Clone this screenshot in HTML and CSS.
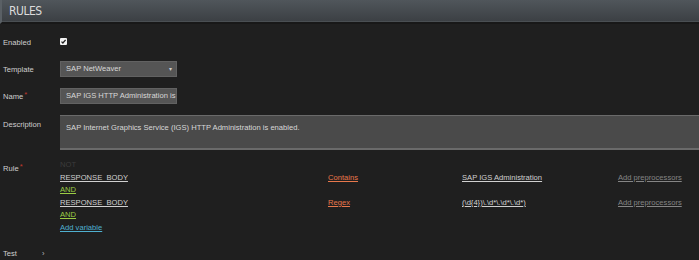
FILE: index.html
```html
<!DOCTYPE html>
<html lang="en">
<head>
	<meta charset="UTF-8">
	<title>Rules</title>
	<link rel="stylesheet" href="styles.css">
</head>
<body>
	<div class="header">RULES</div>
	<div class="form">
		<div class="row row-enabled">
			<div class="label">Enabled</div>
			<div class="field"><span class="check"><svg width="7" height="7" viewBox="0 0 7 7"><path d="M1.5 3.6 L2.9 5 L5.6 1.8" fill="none" stroke="#222" stroke-width="1.3"/></svg></span></div>
		</div>
		<div class="row row-template">
			<div class="label">Template</div>
			<div class="field"><div class="select">SAP NetWeaver<span class="arrow">&#9662;</span></div></div>
		</div>
		<div class="row row-name">
			<div class="label">Name<span class="req">*</span></div>
			<div class="field"><div class="input">SAP IGS HTTP Administration is</div></div>
		</div>
		<div class="row row-desc">
			<div class="label">Description</div>
			<div class="field"><div class="textarea">SAP Internet Graphics Service (IGS) HTTP Administration is enabled.</div></div>
		</div>
		<div class="row row-rule">
			<div class="label label-rule">Rule<span class="req">*</span></div>
			<div class="field rule">
				<div class="not">NOT</div>
				<div class="cond">
					<a class="var">RESPONSE_BODY</a>
					<a class="op">Contains</a>
					<a class="val">SAP IGS Administration</a>
					<a class="pre">Add preprocessors</a>
				</div>
				<div><a class="and">AND</a></div>
				<div class="cond">
					<a class="var">RESPONSE_BODY</a>
					<a class="op">Regex</a>
					<a class="val">(\d{4})\.\d*\.\d*\.\d*)</a>
					<a class="pre">Add preprocessors</a>
				</div>
				<div><a class="and">AND</a></div>
				<div><a class="addvar">Add variable</a></div>
			</div>
		</div>
		<div class="row row-test">
			<div class="label label-test">Test<span class="chev">&rsaquo;</span></div>
		</div>
	</div>
</body>
</html>
```

FILE: styles.css
```css
*{
	margin: 0;
	padding: 0;
	box-sizing: border-box;
}
body{
	background: #1f1f1f;
	font-family: "Liberation Sans", Arial, sans-serif;
	font-size: 7.6px;
	color: #cfcfcf;
	width: 699px;
	height: 260px;
	overflow: hidden;
}
.header{
	height: 24px;
	padding-left: 7px;
	background: linear-gradient(#50565b, #3b3f43);
	border-left: 2px solid #5a6065;
	border-bottom: 2px solid #181818;
	box-shadow: inset 0 -1px 0 #4a4f53;
	font-family: "DejaVu Sans", sans-serif;
	font-stretch: condensed;
	font-size: 12px;
	line-height: 22px;
	color: #dcdcdc;
	letter-spacing: -0.5px;
}
.form{
	padding-left: 3px;
}
.row{
	display: grid;
	grid-template-columns: 57px 1fr;
	align-items: center;
}
.label{
	white-space: nowrap;
}
.req{
	color: #c0392b;
	position: relative;
	top: -2px;
	margin-left: 1px;
}
.row-enabled{
	margin-top: 11px;
	height: 14px;
}
.check{
	display: block;
	width: 7px;
	height: 7px;
	background: #f2f2f2;
	border-radius: 1px;
	margin-top: -2px;
}
.check svg{
	display: block;
}
.row-template{
	margin-top: 12px;
}
.select, .input{
	width: 117px;
	height: 16px;
	background: #555;
	border: 1px solid #626262;
	padding-left: 5px;
	line-height: 14px;
	color: #d8d8d8;
	position: relative;
	white-space: nowrap;
	overflow: hidden;
}
.arrow{
	position: absolute;
	right: 4px;
	top: 0;
	font-size: 6px;
	color: #ccc;
}
.row-name{
	margin-top: 11px;
}
.row-desc{
	margin-top: 11px;
	align-items: start;
}
.row-desc .label{
	padding-top: 5px;
}
.textarea{
	height: 35px;
	background: #4a4a4a;
	border-top: 1px solid #6a6a6a;
	border-bottom: 2px solid #6a6a6a;
	padding: 7px 6px;
	color: #d8d8d8;
}
.row-rule{
	margin-top: 9px;
	align-items: start;
}
.label-rule{
	padding-top: 5px;
}
.rule{
	line-height: 12.6px;
}
.rule a{
	text-decoration: underline;
}
.not{
	color: #3c3c3c;
}
.cond{
	display: grid;
	grid-template-columns: 268px 134px 156px 1fr;
}
.var, .val{
	color: #d0d0d0;
}
.op{
	color: #e8784c;
}
.pre{
	color: #858585;
}
.and{
	color: #9bcc44;
}
.addvar{
	color: #4fb0d0;
}
.row-test{
	margin-top: 14px;
}
.chev{
	margin-left: 25px;
	color: #bbb;
}
```
